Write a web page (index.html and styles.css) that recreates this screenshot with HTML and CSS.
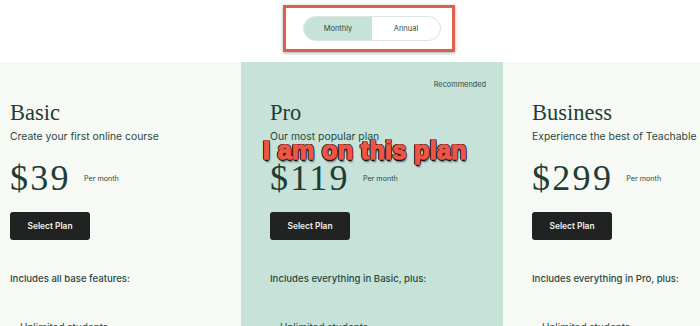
FILE: index.html
```html
<!DOCTYPE html>
<html lang="en">
<head>
<meta charset="utf-8">
<title>Pricing</title>
<link rel="stylesheet" href="styles.css">
</head>
<body>
<div class="page">
  <div class="topbar">
    <div class="toggle-wrap">
      <div class="toggle">
        <span class="opt active">Monthly</span>
        <span class="opt">Annual</span>
      </div>
    </div>
  </div>
  <div class="plans">
    <div class="card first">
      <div class="rec"></div>
      <h2 class="name">Basic</h2>
      <p class="sub">Create your first online course</p>
      <div class="price"><span class="amt">$39</span><span class="per">Per month</span></div>
      <button class="btn">Select Plan</button>
      <p class="inc">Includes all base features:</p>
      <ul class="feats"><li>Unlimited students</li></ul>
    </div>
    <div class="card pro">
      <div class="rec">Recommended</div>
      <h2 class="name">Pro</h2>
      <p class="sub">Our most popular plan</p>
      <div class="price"><span class="amt">$119</span><span class="per">Per month</span></div>
      <button class="btn">Select Plan</button>
      <p class="inc">Includes everything in Basic, plus:</p>
      <ul class="feats"><li>Unlimited students</li></ul>
      <div class="note">I am on this plan</div>
    </div>
    <div class="card">
      <div class="rec"></div>
      <h2 class="name">Business</h2>
      <p class="sub">Experience the best of Teachable</p>
      <div class="price"><span class="amt">$299</span><span class="per">Per month</span></div>
      <button class="btn">Select Plan</button>
      <p class="inc">Includes everything in Pro, plus:</p>
      <ul class="feats"><li>Unlimited students</li></ul>
    </div>
  </div>
</div>
</body>
</html>
```
FILE: styles.css
```css
html, body {
  margin: 0;
  padding: 0;
  background: #ffffff;
  overflow: hidden;
}
body {
  font-family: Inter, "Liberation Sans", sans-serif;
  color: #24423a;
  width: 700px;
  height: 326px;
}
.page {
  width: 700px;
  height: 326px;
  overflow: hidden;
}
.topbar {
  height: 62px;
  display: flex;
  justify-content: center;
  align-items: flex-start;
  background: #fff;
}
.toggle-wrap {
  margin-top: 5px;
  margin-left: 38px;
  width: 166px;
  height: 41px;
  border: 3px solid #de5f4d;
  box-shadow: 0 1px 3px rgba(0,0,0,0.35);
  display: flex;
  align-items: center;
  justify-content: center;
}
.toggle {
  display: flex;
  width: 136px;
  height: 23px;
  border: 1px solid #dbe5e0;
  border-radius: 13px;
  overflow: hidden;
  background: #fff;
  margin-left: 6px;
}
.opt {
  flex: 1;
  display: flex;
  align-items: center;
  justify-content: center;
  font-size: 7.5px;
  color: #2d4a42;
}
.opt.active {
  background: #c7e3d9;
}
.plans {
  display: grid;
  grid-template-columns: 241px 262px 262px;
  height: 264px;
}
.card {
  background: #f7f9f4;
  padding: 0 17px 0 29px;
  position: relative;
}
.card.first {
  padding-left: 10px;
}
.card.pro {
  background: #c7e3d9;
}
.rec {
  height: 11px;
  margin-top: 17px;
  text-align: right;
  font-size: 7.35px;
  line-height: 11px;
  color: #2d4a42;
}
.name {
  margin: 11px 0 0;
  font-family: "Liberation Serif", "DejaVu Serif", serif;
  font-weight: normal;
  font-size: 22.5px;
  line-height: 24px;
  color: #1f3d35;
}
.sub {
  margin: 5px 0 0;
  font-size: 10.4px;
  line-height: 14px;
  color: #2a4840;
}
.price {
  margin-top: 16px;
  height: 36px;
  display: flex;
  align-items: center;
}
.amt {
  font-family: "Liberation Serif", "DejaVu Serif", serif;
  font-size: 36px;
  line-height: 36px;
  color: #1f3d35;
  letter-spacing: 2.3px;
}
.per {
  margin-left: 13px;
  font-size: 7.2px;
  color: #2d4a42;
}
.btn {
  display: block;
  margin-top: 16px;
  width: 80px;
  height: 28px;
  border: none;
  border-radius: 3px;
  background: #212222;
  color: #f2f2f2;
  font-family: Inter, "Liberation Sans", sans-serif;
  font-weight: 600;
  font-size: 8.4px;
  padding: 0;
}
.inc {
  margin: 33px 0 0;
  font-size: 9.6px;
  line-height: 12px;
  font-weight: 500;
  color: #2a4840;
}
.feats {
  margin: 36px 0 0;
  padding-left: 10px;
  list-style: none;
  font-size: 10px;
  line-height: 12px;
  color: #2a4840;
}
.note {
  position: absolute;
  left: 22px;
  top: 74px;
  font-family: "Liberation Sans", Arial, sans-serif;
  font-weight: bold;
  font-size: 25px;
  line-height: 29px;
  letter-spacing: 0.4px;
  color: #ee5545;
  -webkit-text-stroke: 1.6px #ee5545;
  text-shadow:
    1.5px 0 0 #141414, -1.5px 0 0 #141414, 0 1.5px 0 #141414, 0 -1.5px 0 #141414,
    1.2px 1.2px 0 #141414, -1.2px 1.2px 0 #141414, 1.2px -1.2px 0 #141414, -1.2px -1.2px 0 #141414,
    1px 2.5px 2px rgba(0,0,0,0.6);
  white-space: nowrap;
}
```
